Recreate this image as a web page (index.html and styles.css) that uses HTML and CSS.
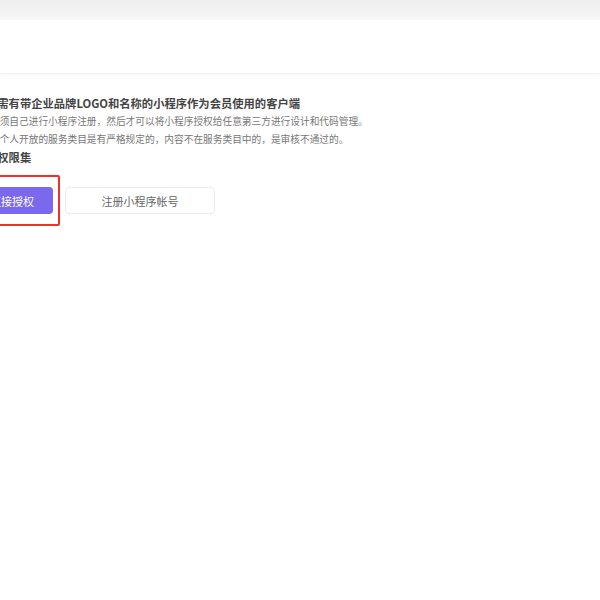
FILE: index.html
```html
<!DOCTYPE html>
<html lang="zh-CN">
<head>
  <meta charset="UTF-8" />
  <meta name="viewport" content="width=device-width,initial-scale=1.0" />
  <title>小程序授权</title>
  <link rel="stylesheet" href="styles.css">
</head>
<body>

  <!-- Top strip -->
  <div class="topbar"></div>

  <!-- Page header -->
  <div class="header"></div>

  <!-- Notes -->
  <div class="content">
    <div class="note-title">必需有带企业品牌LOGO和名称的小程序作为会员使用的客户端</div>
    <div class="note-text">必须自己进行小程序注册，然后才可以将小程序授权给任意第三方进行设计和代码管理。</div>
    <div class="note-text">对个人开放的服务类目是有严格规定的，内容不在服务类目中的，是审核不通过的。</div>
    <div class="note-title">授权限集</div>
  </div>

  <!-- Buttons -->
  <div class="button-row">
    <div class="highlight">
      <button class="btn btn-primary">直接授权</button>
    </div>
    <button class="btn btn-default">注册小程序帐号</button>
  </div>

</body>
</html>
```

FILE: styles.css
```css
body {
  margin: 0;
  background: #fff;
  font-family: "Noto Sans CJK SC", "Noto Sans", sans-serif;
  overflow: hidden;
}
.topbar {
  height: 20px;
  background: linear-gradient(#eeeeee, #f7f7f7);
}
.header {
  height: 53px;
  background: #fff;
  border-bottom: 1px solid #f3f3f3;
  box-shadow: 0 1px 2px rgba(0, 0, 0, 0.03);
}
.content {
  margin-left: -14px;
  padding-top: 20px;
}
.note-title {
  font-size: 11.3px;
  line-height: 18px;
  font-weight: bold;
  color: #444;
  white-space: nowrap;
}
.note-text {
  font-size: 9.7px;
  line-height: 18px;
  color: #777;
  padding-left: 4px;
  white-space: nowrap;
}
.button-row {
  display: flex;
  align-items: center;
  gap: 5px;
  margin-left: -36px;
  margin-top: 9px;
}
/* red annotation box around the main button */
.highlight {
  border: 2px solid #f0302a;
  border-radius: 2px;
  padding: 10px 5px;
}
.btn {
  height: 27px;
  font-family: inherit;
  font-size: 11px;
  border-radius: 4px;
  cursor: pointer;
  padding: 0;
}
.btn-primary {
  display: block;
  width: 82px;
  background: #7b68ee;
  color: #fff;
  border: none;
}
.btn-default {
  width: 150px;
  background: #fff;
  color: #666;
  border: 1px solid #ececec;
}
```
